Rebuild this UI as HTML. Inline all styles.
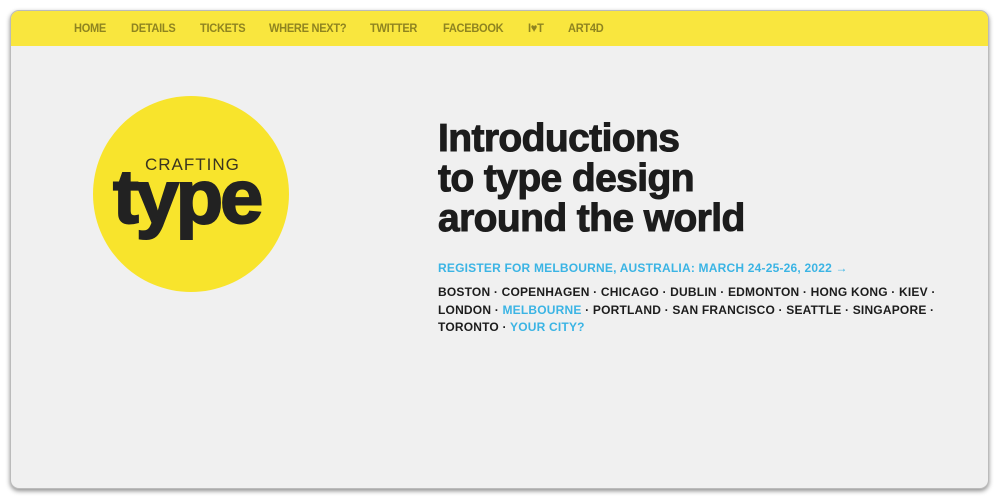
<!DOCTYPE html>
<html><head><meta charset="utf-8"><style>
html,body{margin:0;padding:0;width:1000px;height:500px;background:#fff;overflow:hidden}
.frame{position:absolute;left:10px;top:10px;width:979px;height:479px;background:#f0f0f0;border-radius:9px;box-shadow:0 2px 5px rgba(0,0,0,.45);overflow:hidden;border:1px solid #bbb;box-sizing:border-box}
.nav{height:35px;background:#f9e63e;position:relative}
.nav span{position:absolute;top:10px;font:bold 12px "Liberation Sans",sans-serif;color:#8f8420;letter-spacing:-.3px;transform:scaleX(.92);transform-origin:left}
.logo{position:absolute;left:82px;top:85px;width:196px;height:196px;border-radius:50%;background:#f8e42c}
.craft{position:absolute;left:52px;top:59px;font:17px "Liberation Sans",sans-serif;color:#3a3520;letter-spacing:1px}
.type{position:absolute;left:20px;top:62px;font:bold 76px "Liberation Sans",sans-serif;color:#222;letter-spacing:-3px;line-height:80px;-webkit-text-stroke:2px #222;transform:scaleX(1.02);transform-origin:left}
h1{position:absolute;left:427px;top:108px;margin:0;font:bold 39px/40px "Liberation Sans",sans-serif;color:#1c1c1c;letter-spacing:-.6px;-webkit-text-stroke:1px #1c1c1c}
.reg{position:absolute;left:427px;top:250px;font:bold 12px "Liberation Sans",sans-serif;color:#3bb4e4;letter-spacing:.2px}
.cities{position:absolute;left:427px;top:273px;font:bold 12px/17.5px "Liberation Sans",sans-serif;color:#1c1c1c;letter-spacing:.2px;width:540px}
.b{color:#3bb4e4}
</style></head><body>
<div class="frame">
<div class="nav">
<span style="left:63px">HOME</span><span style="left:120px">DETAILS</span><span style="left:189px">TICKETS</span><span style="left:258px">WHERE NEXT?</span><span style="left:359px">TWITTER</span><span style="left:432px">FACEBOOK</span><span style="left:517px">I♥T</span><span style="left:557px">ART4D</span>
</div>
<div class="logo"><div class="craft">CRAFTING</div><div class="type">type</div></div>
<h1>Introductions<br>to type design<br>around the world</h1>
<div class="reg">REGISTER FOR MELBOURNE, AUSTRALIA: MARCH 24-25-26, 2022 →</div>
<div class="cities">BOSTON · COPENHAGEN · CHICAGO · DUBLIN · EDMONTON · HONG KONG · KIEV ·<br>LONDON · <span class="b">MELBOURNE</span> · PORTLAND · SAN FRANCISCO · SEATTLE · SINGAPORE ·<br>TORONTO · <span class="b">YOUR CITY?</span></div>
</div>
</body></html>
